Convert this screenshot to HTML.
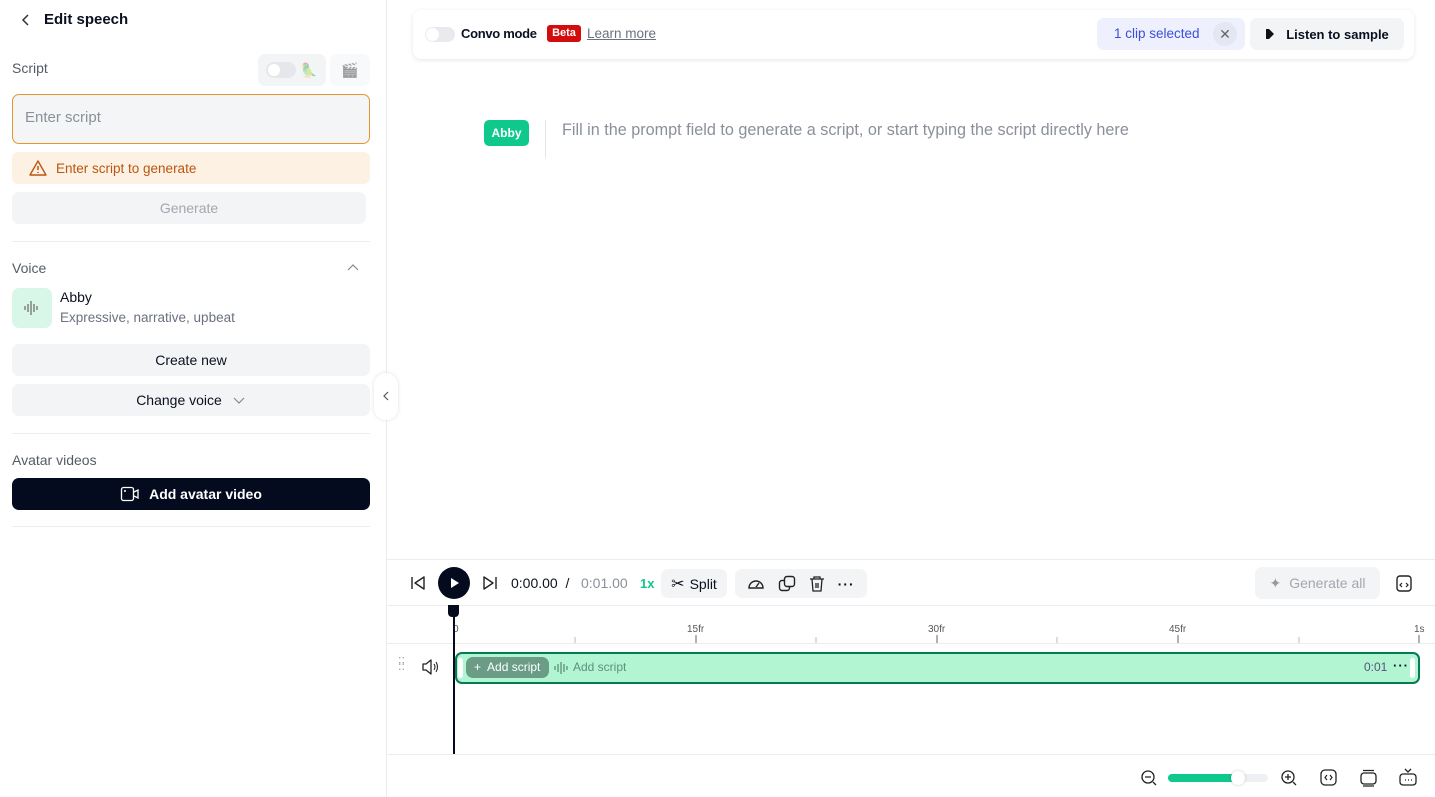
<!DOCTYPE html>
<html><head><meta charset="utf-8"><style>
*{box-sizing:border-box;margin:0;padding:0}
body{width:1435px;height:797px;overflow:hidden;font-family:"Liberation Sans",sans-serif;color:#0b1020;background:#fff;position:relative;font-size:14px}
.a{position:absolute}
.btn{position:absolute;background:#f3f4f6;border-radius:7px;display:flex;align-items:center;justify-content:center;font-size:14px}
svg{display:block}
</style></head><body>
<!-- sidebar -->
<div class="a" style="left:386px;top:0;width:1px;height:797px;background:#ececef"></div>
<svg class="a" style="left:20px;top:13px" width="12" height="14"><path d="M8 2L3 7l5 5" stroke="#333" stroke-width="1.5" fill="none"/></svg>
<div class="a" style="left:44px;top:11px;font-size:15px;font-weight:bold">Edit speech</div>
<div class="a" style="left:12px;top:60px;color:#555b66;font-size:14px">Script</div>
<div class="btn" style="left:258px;top:54px;width:68px;height:32px;justify-content:flex-start;padding-left:8px"><div style="width:30px;height:16px;border-radius:8px;background:#e5e7eb;position:relative"><div style="position:absolute;left:2px;top:2px;width:12px;height:12px;border-radius:6px;background:#fff"></div></div><span style="margin-left:4px;opacity:.4;font-size:14px">🦜</span></div>
<div class="btn" style="left:330px;top:54px;width:40px;height:32px;opacity:.5">🎬</div>
<div class="a" style="left:12px;top:94px;width:358px;height:50px;border:1px solid #e8952f;border-radius:7px;background:#f4f5f7;padding:14px 12px;color:#8a909a;font-size:15px">Enter script</div>
<div class="a" style="left:12px;top:152px;width:358px;height:32px;border-radius:6px;background:#fdf1e4;display:flex;align-items:center;padding-left:16px;color:#b9560f;font-size:13.5px">
<svg width="20" height="18" style="margin-right:8px"><path d="M10 2L18 16H2Z" stroke="#b9560f" stroke-width="1.4" fill="none" stroke-linejoin="round"/><path d="M10 7v4M10 13v1" stroke="#b9560f" stroke-width="1.5"/></svg>Enter script to generate</div>
<div class="btn" style="left:12px;top:192px;width:354px;height:32px;color:#a3a7ae">Generate</div>
<div class="a" style="left:12px;top:241px;width:358px;height:1px;background:#ececef"></div>
<div class="a" style="left:12px;top:260px;color:#555b66">Voice</div>
<svg class="a" style="left:346px;top:263px" width="14" height="10"><path d="M2 7l5-5 5 5" stroke="#888" stroke-width="1.2" fill="none"/></svg>
<div class="a" style="left:12px;top:288px;width:40px;height:40px;border-radius:7px;background:#d9f7e8;display:flex;align-items:center;justify-content:center"><svg width="18" height="16"><path d="M2 6v4M5 4v8M8 1v14M11 4v8M14 6v4" stroke="#666" stroke-width="1.2"/></svg></div>
<div class="a" style="left:60px;top:289px;font-size:14px">Abby</div>
<div class="a" style="left:60px;top:310px;font-size:13.5px;color:#6b7180">Expressive, narrative, upbeat</div>
<div class="btn" style="left:12px;top:344px;width:358px;height:32px">Create new</div>
<div class="btn" style="left:12px;top:384px;width:358px;height:32px">Change voice<svg width="14" height="10" style="margin-left:10px"><path d="M2 3l5 5 5-5" stroke="#888" stroke-width="1.2" fill="none"/></svg></div>
<div class="a" style="left:374px;top:373px;width:24px;height:47px;border-radius:12px;background:#fff;box-shadow:0 0 4px rgba(0,0,0,.12)"><svg style="margin:18px 0 0 8px" width="8" height="10"><path d="M6 1L2 5l4 4" stroke="#555" stroke-width="1.2" fill="none"/></svg></div>
<div class="a" style="left:12px;top:433px;width:358px;height:1px;background:#ececef"></div>
<div class="a" style="left:12px;top:452px;color:#555b66">Avatar videos</div>
<div class="a" style="left:12px;top:478px;width:358px;height:32px;border-radius:7px;background:#050b1e;color:#fff;display:flex;align-items:center;justify-content:center;font-weight:bold;font-size:14px"><svg width="20" height="16" style="margin-right:9px"><rect x="1.5" y="1.5" width="12" height="13" rx="2" stroke="#fff" stroke-width="1.3" fill="none"/><path d="M14 6l4-2v8l-4-2" stroke="#fff" stroke-width="1.3" fill="none"/><circle cx="5" cy="5" r="1" fill="#fff"/></svg>Add avatar video</div>
<div class="a" style="left:12px;top:526px;width:358px;height:1px;background:#ececef"></div>

<!-- top bar -->
<div class="a" style="left:413px;top:10px;width:1001px;height:49px;border-radius:8px;background:#fff;box-shadow:0 1px 4px rgba(0,0,0,.1)"></div>
<div class="a" style="left:425px;top:27px;width:30px;height:15px;border-radius:8px;background:#e9eaee"><div style="position:absolute;left:1px;top:1px;width:13px;height:13px;border-radius:7px;background:#fff"></div></div>
<div class="a" style="left:461px;top:26px;font-weight:bold;font-size:13px;letter-spacing:-0.3px">Convo mode</div>
<div class="a" style="left:547px;top:25px;width:34px;height:17px;border-radius:3px;background:#d10d0d;color:#fff;font-size:11px;font-weight:bold;text-align:center;line-height:17px">Beta</div>
<div class="a" style="left:587px;top:26px;font-size:13.5px;color:#6b7180;text-decoration:underline">Learn more</div>
<div class="a" style="left:1097px;top:18px;width:148px;height:32px;border-radius:7px;background:#eef0fd;color:#3b4fd9;font-size:13.5px;padding:8px 0 0 17px">1 clip selected</div>
<div class="a" style="left:1213px;top:22px;width:24px;height:24px;border-radius:12px;background:#e4e6f1;color:#666;text-align:center;line-height:24px;font-size:14px">✕</div>
<div class="btn" style="left:1250px;top:18px;width:154px;height:32px;font-weight:bold;font-size:13px"><svg width="10" height="12" style="margin-right:11px"><path d="M1 1h3l5 5-5 5H1z" fill="#111"/></svg>Listen to sample</div>

<div class="a" style="left:484px;top:120px;width:45px;height:26px;border-radius:5px;background:#0fc88b;color:#fff;font-size:12px;font-weight:bold;text-align:center;line-height:26px">Abby</div>
<div class="a" style="left:545px;top:120px;width:1px;height:38px;background:#e5e6ea"></div>
<div class="a" style="left:562px;top:121px;font-size:16.2px;color:#8a909a">Fill in the prompt field to generate a script, or start typing the script directly here</div>

<!-- timeline -->
<div class="a" style="left:387px;top:559px;width:1048px;height:1px;background:#ececef"></div>
<svg class="a" style="left:410px;top:576px" width="16" height="14"><path d="M2 1v12M14 1L5 7l9 6z" stroke="#222" stroke-width="1.4" fill="none" stroke-linejoin="round"/></svg>
<div class="a" style="left:438px;top:567px;width:32px;height:32px;border-radius:16px;background:#050b1e"><svg style="margin:10px 0 0 12px" width="10" height="12"><path d="M1 1l8 5-8 5z" fill="#fff"/></svg></div>
<svg class="a" style="left:482px;top:576px" width="16" height="14"><path d="M14 1v12M2 1l9 6-9 6z" stroke="#222" stroke-width="1.4" fill="none" stroke-linejoin="round"/></svg>
<div class="a" style="left:511px;top:575px;font-size:14px">0:00.00&nbsp;&nbsp;/</div>
<div class="a" style="left:581px;top:575px;font-size:14px;color:#8a909a">0:01.00</div>
<div class="a" style="left:640px;top:576px;font-size:13px;color:#0fc88b;font-weight:bold">1x</div>
<div class="btn" style="left:661px;top:569px;width:66px;height:29px"><span style="font-size:16px;margin-right:5px">✂</span>Split</div>
<div class="btn" style="left:735px;top:569px;width:132px;height:29px;justify-content:space-around;padding:0 6px">
<svg width="18" height="16"><path d="M2 12a7 7 0 1 1 14 0z" stroke="#222" stroke-width="1.4" fill="none"/><path d="M9 11l3-4" stroke="#222" stroke-width="1.4"/></svg>
<svg width="18" height="18"><rect x="1.5" y="5.5" width="10" height="10" rx="2.5" stroke="#222" stroke-width="1.4" fill="none"/><rect x="6.5" y="1.5" width="10" height="10" rx="2.5" stroke="#222" stroke-width="1.4" fill="#f3f4f6"/></svg>
<svg width="16" height="18"><path d="M1 4h14M5 4V2h6v2M3 4l1 12h8l1-12M7 8v5M9 8v5" stroke="#222" stroke-width="1.3" fill="none"/></svg>
<span style="font-weight:bold;letter-spacing:1px">···</span></div>
<div class="btn" style="left:1255px;top:567px;width:125px;height:32px;color:#a3a7ae"><span style="margin-right:8px;color:#999">✦</span>Generate all</div>
<svg class="a" style="left:1396px;top:575px" width="16" height="17"><rect x="1" y="1" width="14" height="15" rx="3" stroke="#222" stroke-width="1.4" fill="none"/><path d="M6 8l-2 2 2 2M10 8l2 2-2 2" stroke="#222" stroke-width="1.2" fill="none"/></svg>
<div class="a" style="left:387px;top:605px;width:1048px;height:1px;background:#ececef"></div>
<div class="a" style="left:387px;top:643px;width:1048px;height:1px;background:#ececef"></div>
<svg class="a" style="left:387px;top:606px" width="1048" height="40" font-family="Liberation Sans" font-size="10" fill="#555">
<text x="66" y="26">0</text><text x="300" y="26">15fr</text><text x="541" y="26">30fr</text><text x="782" y="26">45fr</text><text x="1027" y="26">1s</text>
<g stroke="#bbb"><path d="M188 31v6M429 31v6M670 31v6M912 31v6"/></g>
<g stroke="#666"><path d="M309 29v8M550 29v8M791 29v8M1032 29v8"/></g>
</svg>
<div class="a" style="left:455px;top:652px;width:965px;height:32px;border:2px solid #047a55;border-radius:7px;background:#b2f5d3"></div>
<div class="a" style="left:458px;top:658px;width:5px;height:20px;border-radius:3px;background:#fff"></div>
<div class="a" style="left:1410px;top:658px;width:5px;height:20px;border-radius:3px;background:#fff"></div>
<div class="a" style="left:466px;top:657px;width:83px;height:21px;border-radius:7px;background:#6a9c86;color:#fff;font-size:12px;line-height:21px;padding-left:8px"><span style="font-weight:normal;margin-right:6px">+</span>Add script</div>
<svg class="a" style="left:554px;top:661px" width="14" height="14"><path d="M1 5v4M4 3v8M7 1v12M10 3v8M13 5v4" stroke="#5f8f7a" stroke-width="1.3"/></svg>
<div class="a" style="left:573px;top:660px;font-size:12px;color:#5f8f7a">Add script</div>
<div class="a" style="left:1364px;top:660px;font-size:12px;color:#557">0:01</div>
<div class="a" style="left:1393px;top:658px;font-size:13px;font-weight:bold;letter-spacing:1px">···</div>
<div class="a" style="left:398px;top:660px;color:#999;font-size:11px;line-height:5px">⁚⁚<br>⁚⁚</div>
<svg class="a" style="left:421px;top:659px" width="18" height="16"><path d="M2 5h3l5-4v14l-5-4H2z" stroke="#222" stroke-width="1.3" fill="none" stroke-linejoin="round"/><path d="M13 5q2 3 0 6M15 3q3 5 0 10" stroke="#222" stroke-width="1.1" fill="none"/></svg>
<div class="a" style="left:453px;top:606px;width:2px;height:148px;background:#050b1e"></div>
<div class="a" style="left:448px;top:605px;width:11px;height:12px;border-radius:0 0 4px 4px;background:#050b1e"></div>
<div class="a" style="left:387px;top:754px;width:1048px;height:1px;background:#ececef"></div>
<svg class="a" style="left:1140px;top:769px" width="18" height="18"><circle cx="8" cy="8" r="6" stroke="#222" stroke-width="1.3" fill="none"/><path d="M5 8h6M13 13l3 3" stroke="#222" stroke-width="1.3"/></svg>
<div class="a" style="left:1168px;top:774px;width:100px;height:8px;border-radius:4px;background:#eef0f3"></div>
<div class="a" style="left:1168px;top:774px;width:70px;height:8px;border-radius:4px;background:#0fc88b"></div>
<div class="a" style="left:1231px;top:771px;width:14px;height:14px;border-radius:7px;background:#fff;box-shadow:0 0 3px rgba(0,0,0,.2)"></div>
<svg class="a" style="left:1280px;top:769px" width="18" height="18"><circle cx="8" cy="8" r="6" stroke="#222" stroke-width="1.3" fill="none"/><path d="M5 8h6M8 5v6M13 13l3 3" stroke="#222" stroke-width="1.3"/></svg>
<svg class="a" style="left:1320px;top:769px" width="17" height="17"><rect x="1" y="1" width="15" height="15" rx="4" stroke="#222" stroke-width="1.3" fill="none"/><path d="M7 6l-2 2.5 2 2.5M10 6l2 2.5-2 2.5" stroke="#222" stroke-width="1.2" fill="none"/></svg>
<svg class="a" style="left:1360px;top:769px" width="17" height="18"><rect x="1" y="4" width="15" height="11" rx="3" stroke="#222" stroke-width="1.3" fill="none"/><path d="M3 1.5h11M3 17h11" stroke="#222" stroke-width="1.3"/></svg>
<svg class="a" style="left:1399px;top:768px" width="18" height="18"><rect x="1" y="6" width="16" height="11" rx="3" stroke="#222" stroke-width="1.3" fill="none"/><path d="M6 1l3 3 3-3M6 12h1M9 12h1M12 12h1" stroke="#222" stroke-width="1.3" fill="none"/></svg>
</body></html>
